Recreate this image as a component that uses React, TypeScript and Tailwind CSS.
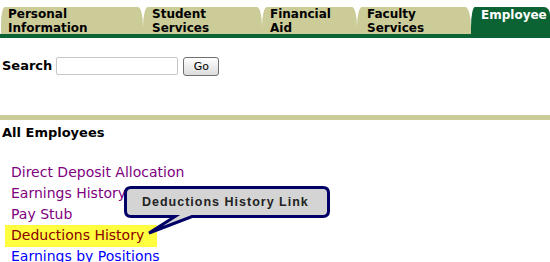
import React from 'react';

const tabs = [
  { label: ['Personal', 'Information'], cls: 'ml-[1px] w-[142px] pl-[7px] rounded-tl-[4px_16px] rounded-tr-[5px_20px]' },
  { label: ['Student', 'Services'], cls: 'w-[119px] pl-[9px] rounded-tl-[5px_20px] rounded-tr-[5px_20px]' },
  { label: ['Financial', 'Aid'], cls: 'w-[95px] pl-[8px] rounded-tl-[5px_20px] rounded-tr-[5px_20px]' },
  { label: ['Faculty', 'Services'], cls: 'w-[114px] pl-[10px] rounded-tl-[5px_20px] rounded-tr-[6px_20px]' },
];

const links = [
  { text: 'Direct Deposit Allocation', color: 'text-[#800080]' },
  { text: 'Earnings History', color: 'text-[#800080]' },
  { text: 'Pay Stub', color: 'text-[#800080]' },
  { text: 'Deductions History', color: 'text-[#880000]', highlight: true },
  { text: 'Earnings by Positions', color: 'text-[#0000ff]' },
];

export default function App() {
  return (
    <div className="relative w-[550px] h-[262px] overflow-hidden bg-white font-['DejaVu_Sans',Verdana,sans-serif] text-black">
      {/* tab bar */}
      <div className="flex pt-[7px] h-[34px]">
        {tabs.map((t) => (
          <div key={t.label[0]} className={`h-[27px] bg-[#cccc99] text-[12px] leading-[14px] font-bold ${t.cls}`}>
            <div>{t.label[0]}</div>
            <div>{t.label[1]}</div>
          </div>
        ))}
        <div className="flex-1 h-[27px] bg-[#0b6333] text-white text-[12px] leading-[14px] font-bold pl-[10px] pt-[1px] rounded-tl-[4px_20px] rounded-tr-[6px_8px]">
          Employee
        </div>
      </div>
      <div className="h-[4px] bg-[#0b6333]" />

      {/* search */}
      <div className="flex items-start pl-[2px] mt-[19px] h-[19px]">
        <span className="text-[13px] leading-[15px] font-bold mt-[1px]">Search</span>
        <input
          type="text"
          className="ml-[4px] w-[122px] h-[18px] border border-[#c6c6c6] rounded-[2px] outline-none"
        />
        <button className="ml-[5px] w-[36px] h-[19px] border border-[#707070] rounded-[3px] bg-gradient-to-b from-white to-[#dcdcdc] text-[11px] leading-[15px] text-black">
          Go
        </button>
      </div>

      <div className="mt-[39px] h-[5px] bg-[#cccc99]" />

      <div className="pl-[2px] mt-[5px] text-[13px] leading-[15px] font-bold">All Employees</div>

      {/* links */}
      <div className="mt-[22px] pl-[11px] text-[14px] leading-[21px]">
        {links.map((l) =>
          l.highlight ? (
            <div key={l.text} className="h-[21px]">
              <span className={`inline-block -ml-[6px] pl-[6px] pr-[13px] h-[22px] bg-[#ffff40] ${l.color}`}>{l.text}</span>
            </div>
          ) : (
            <div key={l.text} className={`h-[21px] ${l.color}`}>
              {l.text}
            </div>
          )
        )}
      </div>

      {/* callout */}
      <div className="absolute left-[120px] top-[182px] w-[215px] h-[56px]">
        <svg width="215" height="56" viewBox="0 0 215 56" className="absolute left-0 top-0">
          <path
            d="M 11 5.5 H 203 Q 208.5 5.5 208.5 11 V 29 Q 208.5 34.5 203 34.5 H 72 L 29 51 L 55 34.5 H 11 Q 5.5 34.5 5.5 29 V 11 Q 5.5 5.5 11 5.5 Z"
            fill="#d4d4d4"
            stroke="#000066"
            strokeWidth="3"
            strokeLinejoin="miter"
          />
        </svg>
        <span className="absolute left-[22px] top-[13px] whitespace-nowrap font-['Liberation_Sans',Arial,sans-serif] text-[12.5px] leading-[14px] font-bold tracking-[1px] text-[#222222]">
          Deductions History Link
        </span>
      </div>
    </div>
  );
}
